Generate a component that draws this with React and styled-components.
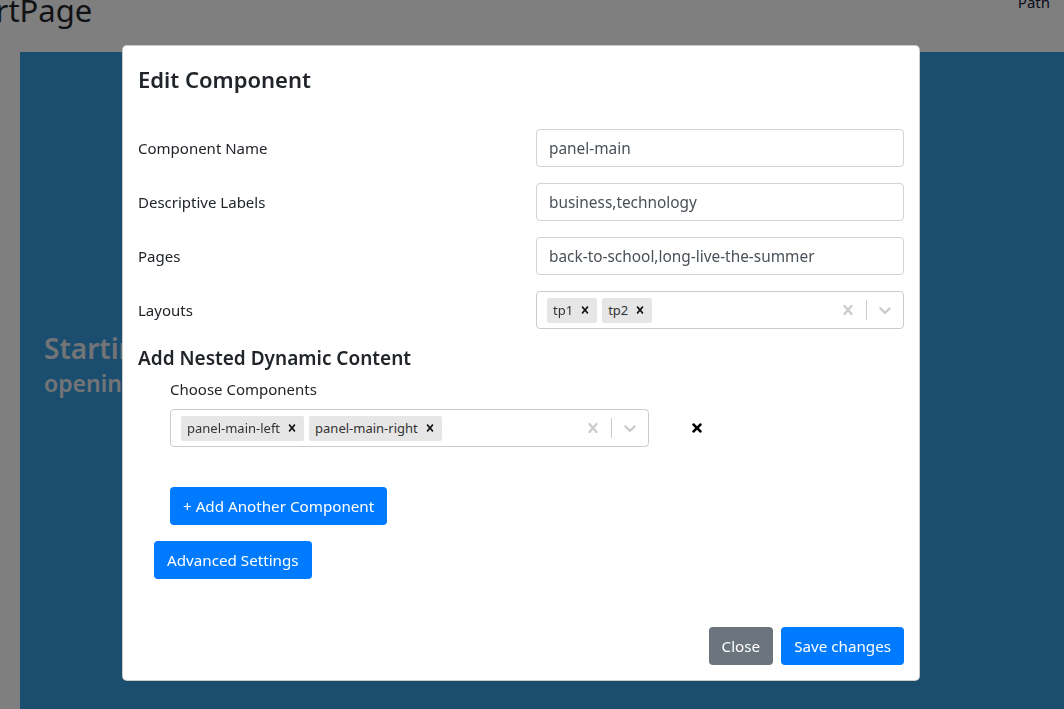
import React from "react";
import styled, { createGlobalStyle } from "styled-components";
import { FaTimes } from "react-icons/fa";

const GlobalStyle = createGlobalStyle`
  html, body {
    margin: 0;
    padding: 0;
    overflow: hidden;
    font-family: "Noto Sans", "Open Sans", sans-serif;
    color: #212529;
    background: #fff;
  }
`;

const Page = styled.div`
  width: 1064px;
  height: 709px;
  overflow: hidden;
`;

const TopBar = styled.header`
  display: flex;
  justify-content: space-between;
  align-items: flex-start;
  height: 66px;
  margin-top: -14px;
  padding-right: 14px;
`;

const Brand = styled.h1`
  margin: 0 0 0 -50px;
  font-size: 31px;
  font-weight: 400;
  line-height: 48px;
`;

const NavLink = styled.span`
  font-size: 15px;
  line-height: 32px;
  color: #1a1a40;
`;

const Hero = styled.section`
  margin-left: 20px;
  height: 680px;
  background: #369adc;
  padding: 276px 0 0 24px;
  color: #e4e9ee;
`;

const HeroTitle = styled.h2`
  margin: 0;
  font-size: 28px;
  font-weight: 600;
  line-height: 40px;
`;

const HeroSub = styled.h3`
  margin: 0;
  font-size: 23px;
  font-weight: 600;
  line-height: 30px;
`;

const Backdrop = styled.div`
  position: fixed;
  inset: 0;
  background: rgba(0, 0, 0, 0.5);
`;

const ModalWrap = styled.div`
  position: fixed;
  inset: 0;
  padding: 45px 0 0 122px;
`;

const Modal = styled.div`
  width: 798px;
  background: #fff;
  border: 1px solid rgba(0, 0, 0, 0.2);
  border-radius: 5px;
  box-sizing: border-box;
  display: flex;
  flex-direction: column;
`;

const ModalHeader = styled.div`
  padding: 17px 15px 14px;
`;

const ModalTitle = styled.h5`
  margin: 0;
  font-size: 22px;
  font-weight: 600;
  line-height: 33px;
`;

const ModalBody = styled.div`
  padding: 19px 15px 32px;
`;

const FieldRow = styled.div`
  display: grid;
  grid-template-columns: 398px 368px;
  align-items: center;
  margin-bottom: ${(p) => (p.$last ? 0 : 16)}px;
`;

const Label = styled.label`
  font-size: 15px;
  line-height: 24px;
`;

const Input = styled.div`
  height: 38px;
  box-sizing: border-box;
  border: 1px solid #ced4da;
  border-radius: 4px;
  padding: 0 12px;
  display: flex;
  align-items: center;
  font-size: 15.4px;
  color: #495057;
`;

const Select = styled.div`
  height: 38px;
  width: ${(p) => p.$width || "auto"};
  box-sizing: border-box;
  border: 1px solid #ccc;
  border-radius: 4px;
  display: flex;
  align-items: center;
  padding-left: 8px;
`;

const Values = styled.div`
  flex: 1;
  display: flex;
  align-items: center;
  gap: 5px;
  padding-left: 2px;
`;

const Chip = styled.div`
  display: flex;
  align-items: center;
  height: 25px;
  background: #e6e6e6;
  border-radius: 2px;
  font-size: 13px;
  color: #333;
  padding-left: 6px;
`;

const ChipRemove = styled.span`
  display: flex;
  align-items: center;
  padding: 0 5px 0 5px;
  color: #111;
`;

const Indicator = styled.span`
  width: 36px;
  display: flex;
  justify-content: center;
  align-items: center;
  color: #ccc;
`;

const Separator = styled.span`
  width: 1px;
  height: 20px;
  background: #ccc;
`;

const SectionTitle = styled.h5`
  margin: 17px 0 0;
  font-size: 19px;
  font-weight: 600;
  line-height: 24px;
`;

const Nested = styled.div`
  padding-left: 32px;
  margin-top: 7px;
`;

const NestedLabel = styled.div`
  font-size: 15px;
  line-height: 24px;
  margin-bottom: 8px;
`;

const NestedRow = styled.div`
  display: flex;
  align-items: center;
  gap: 41px;
`;

const RemoveBtn = styled.span`
  display: flex;
  color: #000;
`;

const Button = styled.button`
  font-family: inherit;
  font-size: 15.2px;
  line-height: 24px;
  height: 38px;
  padding: 6px 13px;
  border: none;
  border-radius: 4px;
  color: #fff;
  background: ${(p) => (p.$variant === "secondary" ? "#6c757d" : "#007bff")};
  cursor: pointer;
`;

const ButtonBlock = styled.div`
  margin-top: ${(p) => p.$top || 0}px;
  padding-left: ${(p) => p.$indent || 0}px;
`;

const ModalFooter = styled.div`
  display: flex;
  justify-content: flex-end;
  gap: 8px;
  padding: 16px 15px 15px;
`;

const Cross = ({ size = 14 }) => (
  <svg width={size} height={size} viewBox="0 0 20 20" fill="currentColor">
    <path d="M14.348 14.849c-0.469 0.469-1.229 0.469-1.697 0l-2.651-3.030-2.651 3.029c-0.469 0.469-1.229 0.469-1.697 0-0.469-0.469-0.469-1.229 0-1.697l2.758-3.15-2.759-3.152c-0.469-0.469-0.469-1.228 0-1.697s1.228-0.469 1.697 0l2.652 3.031 2.651-3.031c0.469-0.469 1.228-0.469 1.697 0s0.469 1.229 0 1.697l-2.758 3.152 2.758 3.15c0.469 0.469 0.469 1.229 0 1.698z" />
  </svg>
);

const Chevron = () => (
  <svg width="20" height="20" viewBox="0 0 20 20" fill="currentColor">
    <path d="M4.516 7.548c0.436-0.446 1.043-0.481 1.576 0l3.908 3.747 3.908-3.747c0.533-0.481 1.141-0.446 1.574 0 0.436 0.445 0.408 1.197 0 1.615-0.406 0.418-4.695 4.502-4.695 4.502-0.217 0.223-0.502 0.335-0.787 0.335s-0.57-0.112-0.789-0.335c0 0-4.287-4.084-4.695-4.502s-0.436-1.17 0-1.615z" />
  </svg>
);

const MultiSelect = ({ values, width }) => (
  <Select $width={width}>
    <Values>
      {values.map((v) => (
        <Chip key={v}>
          {v}
          <ChipRemove>
            <Cross size={14} />
          </ChipRemove>
        </Chip>
      ))}
    </Values>
    <Indicator>
      <Cross size={20} />
    </Indicator>
    <Separator />
    <Indicator>
      <Chevron />
    </Indicator>
  </Select>
);

export default function App() {
  return (
    <>
      <GlobalStyle />
      <Page>
        <TopBar>
          <Brand>StartPage</Brand>
          <NavLink>Path</NavLink>
        </TopBar>
        <Hero>
          <HeroTitle>Starting Page</HeroTitle>
          <HeroSub>opening soon</HeroSub>
        </Hero>
      </Page>
      <Backdrop />
      <ModalWrap>
        <Modal>
          <ModalHeader>
            <ModalTitle>Edit Component</ModalTitle>
          </ModalHeader>
          <ModalBody>
            <FieldRow>
              <Label>Component Name</Label>
              <Input>panel-main</Input>
            </FieldRow>
            <FieldRow>
              <Label>Descriptive Labels</Label>
              <Input>business,technology</Input>
            </FieldRow>
            <FieldRow>
              <Label>Pages</Label>
              <Input>back-to-school,long-live-the-summer</Input>
            </FieldRow>
            <FieldRow $last>
              <Label>Layouts</Label>
              <MultiSelect values={["tp1", "tp2"]} />
            </FieldRow>
            <SectionTitle>Add Nested Dynamic Content</SectionTitle>
            <Nested>
              <NestedLabel>Choose Components</NestedLabel>
              <NestedRow>
                <MultiSelect
                  width="479px"
                  values={["panel-main-left", "panel-main-right"]}
                />
                <RemoveBtn>
                  <FaTimes size={14} />
                </RemoveBtn>
              </NestedRow>
              <ButtonBlock $top={40}>
                <Button>+ Add Another Component</Button>
              </ButtonBlock>
            </Nested>
            <ButtonBlock $top={16} $indent={16}>
              <Button>Advanced Settings</Button>
            </ButtonBlock>
          </ModalBody>
          <ModalFooter>
            <Button $variant="secondary">Close</Button>
            <Button>Save changes</Button>
          </ModalFooter>
        </Modal>
      </ModalWrap>
    </>
  );
}
